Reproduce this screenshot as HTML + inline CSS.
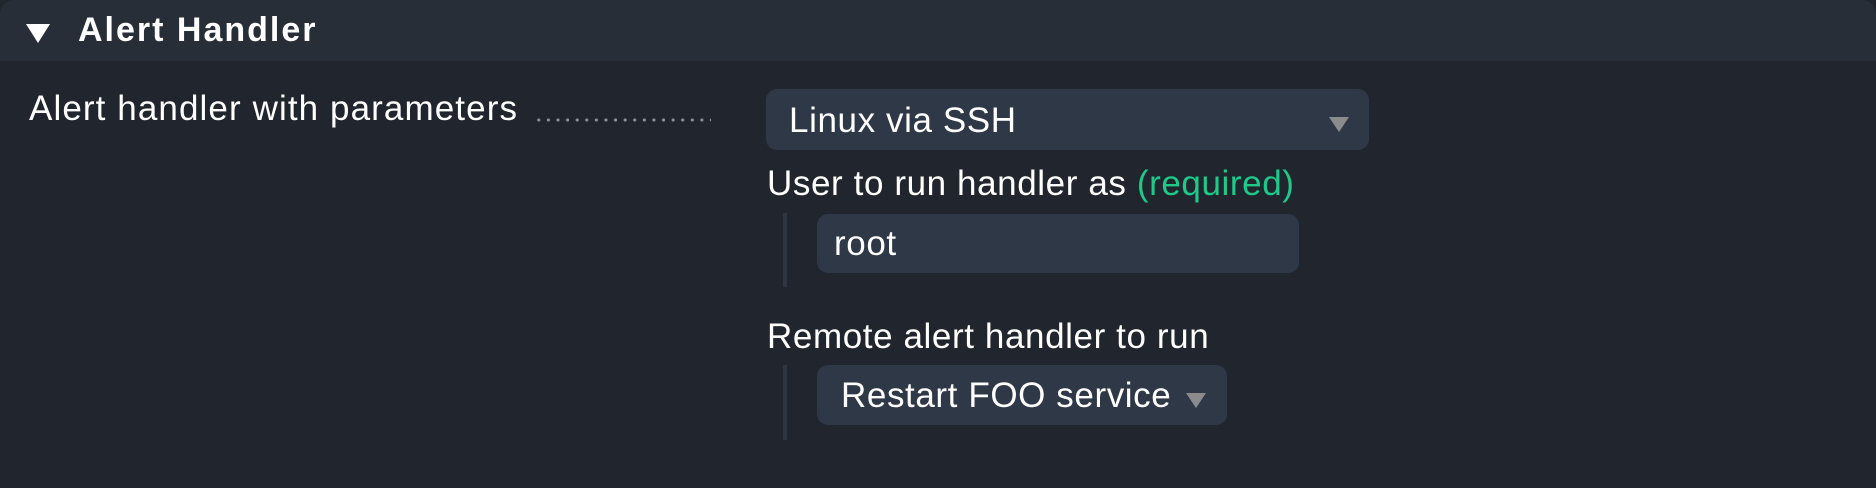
<!DOCTYPE html>
<html><head><style>
html,body{margin:0;padding:0;background:#21262e;}
body{width:1876px;height:488px;position:relative;overflow:hidden;font-family:"Liberation Sans",sans-serif;color:#fff;}
.panel{position:absolute;left:0;top:0;width:1876px;height:488px;background:#21262e;border-radius:14px;overflow:hidden;}
.hdr{position:absolute;left:0;top:0;width:1876px;height:61px;background:#282e38;}
.t{position:absolute;white-space:nowrap;line-height:1;}
.box{position:absolute;background:#2f3846;border-radius:11px;}
.bar{position:absolute;width:4px;background:#2e3541;}
.arr{position:absolute;width:0;height:0;border-left:10px solid transparent;border-right:10px solid transparent;border-top:15px solid #8b8b8b;}
.lbl{font-size:35px;letter-spacing:0.6px;}
</style></head><body>
<div class="panel">
<div class="hdr"></div>
<svg style="position:absolute;left:26px;top:24px" width="24" height="20"><polygon points="0,0 24,0 12,19" fill="#fff"/></svg>
<div class="t" style="left:78px;top:13px;font-size:34px;font-weight:bold;letter-spacing:2px;">Alert Handler</div>

<div class="t lbl" style="left:29px;top:91px;letter-spacing:1.1px;">Alert handler with parameters</div>
<div style="position:absolute;left:534px;top:118px;width:177px;height:4px;background:radial-gradient(circle,#8b9099 1.4px,transparent 1.8px) 0 0/9.6px 4px repeat-x;"></div>

<div class="box" style="left:766px;top:89px;width:603px;height:61px;"></div>
<div class="t lbl" style="left:789px;top:103px;">Linux via SSH</div>
<div class="arr" style="left:1329px;top:117px;"></div>

<div class="t lbl" style="left:767px;top:166px;">User to run handler as <span style="color:#1fc98a">(required)</span></div>
<div class="bar" style="left:783px;top:213px;height:74px;"></div>
<div class="box" style="left:817px;top:214px;width:482px;height:59px;"></div>
<div class="t lbl" style="left:834px;top:226px;">root</div>

<div class="t lbl" style="left:767px;top:319px;">Remote alert handler to run</div>
<div class="bar" style="left:783px;top:365px;height:75px;"></div>
<div class="box" style="left:817px;top:365px;width:410px;height:60px;"></div>
<div class="t lbl" style="left:841px;top:378px;">Restart FOO service</div>
<div class="arr" style="left:1186px;top:393px;"></div>
</div>
</body></html>
